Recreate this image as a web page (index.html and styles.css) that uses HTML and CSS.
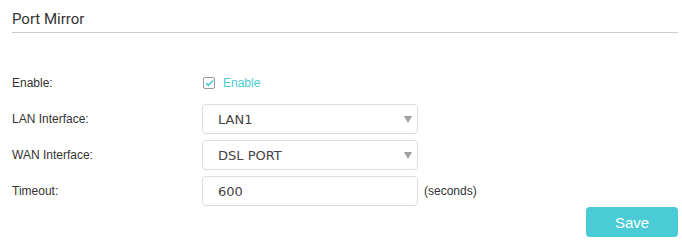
FILE: index.html
```html
<!DOCTYPE html>
<html lang="en">
<head>
    <meta charset="UTF-8">
    <title>Port Mirror</title>
    <link rel="stylesheet" href="styles.css">
</head>
<body>
    <div class="panel">
        <h2 class="panel-title">Port Mirror</h2>

        <form class="form">
            <div class="form-row">
                <label class="form-label">Enable:</label>
                <label class="checkbox">
                    <span class="checkbox-box">
                        <svg width="9" height="8" viewBox="0 0 9 8"><path d="M1 4.2 L3.4 6.3 L8 1.5" fill="none" stroke="#4acbd6" stroke-width="1.6"/></svg>
                    </span>
                    <span class="checkbox-text">Enable</span>
                </label>
            </div>

            <div class="form-row">
                <label class="form-label">LAN Interface:</label>
                <div class="select">
                    <span class="select-value">LAN1</span>
                    <span class="select-arrow"></span>
                </div>
            </div>

            <div class="form-row">
                <label class="form-label">WAN Interface:</label>
                <div class="select">
                    <span class="select-value">DSL PORT</span>
                    <span class="select-arrow"></span>
                </div>
            </div>

            <div class="form-row">
                <label class="form-label">Timeout:</label>
                <input class="text-input" type="text" value="600">
                <span class="hint">(seconds)</span>
            </div>

            <div class="form-actions">
                <button type="button" class="btn-save">Save</button>
            </div>
        </form>
    </div>
</body>
</html>
```

FILE: styles.css
```css
body {
    margin: 0;
    background: #fff;
    font-family: "Liberation Sans", Arial, sans-serif;
    color: #333;
}
.panel {
    padding: 0 4px 0 12px;
}
.panel-title {
    margin: 0;
    padding-top: 11px;
    height: 21px;
    font-family: Roboto, "Liberation Sans", sans-serif;
    font-weight: normal;
    font-size: 15px;
    line-height: 16px;
    color: #333;
    border-bottom: 1px solid #ccc;
}
.form {
    padding-top: 35px;
}
.form-row {
    display: flex;
    align-items: center;
    height: 30px;
    margin-bottom: 6px;
}
.form-label {
    width: 190px;
    font-size: 12px;
    color: #333;
}
.checkbox {
    display: flex;
    align-items: center;
    margin-left: 1px;
}
.checkbox-box {
    width: 10px;
    height: 10px;
    border: 1px solid #999;
    border-radius: 2px;
    display: flex;
    align-items: center;
    justify-content: center;
}
.checkbox-text {
    margin-left: 8px;
    font-size: 12px;
    color: #4acbd6;
}
.select,
.text-input {
    box-sizing: border-box;
    width: 216px;
    height: 30px;
    border: 1px solid #ddd;
    border-radius: 4px;
    background: #fff;
}
.select {
    display: flex;
    align-items: center;
    justify-content: space-between;
    padding: 0 5px 0 15px;
}
.select-value,
.text-input {
    font-family: "DejaVu Sans", Verdana, sans-serif;
    font-size: 13px;
    color: #444;
}
.select-arrow {
    width: 0;
    height: 0;
    border-left: 4px solid transparent;
    border-right: 4px solid transparent;
    border-top: 7px solid #a0a0a0;
}
.text-input {
    padding: 0 15px;
    outline: none;
}
.hint {
    margin-left: 6px;
    font-size: 12px;
    color: #333;
}
.form-actions {
    display: flex;
    justify-content: flex-end;
    margin-top: -5px;
}
.btn-save {
    width: 92px;
    height: 30px;
    border: none;
    border-radius: 4px;
    background: #4acbd6;
    color: #fff;
    font-family: "Liberation Sans", Arial, sans-serif;
    font-size: 15px;
    cursor: pointer;
}
```
